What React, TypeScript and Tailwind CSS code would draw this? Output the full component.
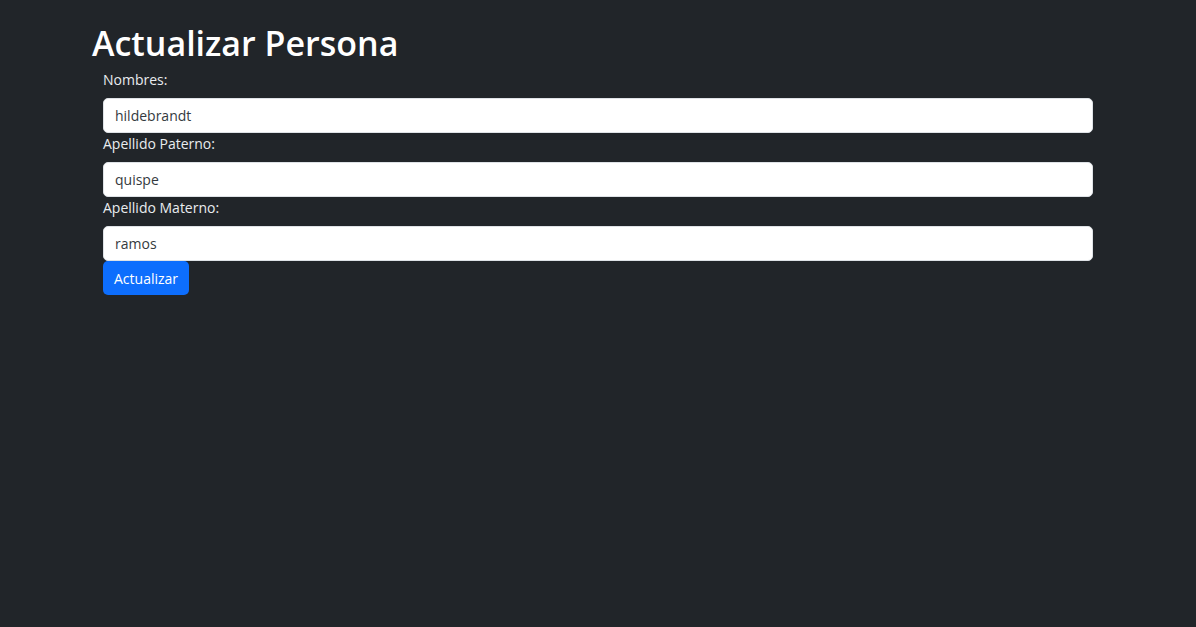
export default function App() {
  return (
    <div
      className="min-h-screen w-full bg-[#212529] text-[#dee2e6]"
      style={{ fontFamily: '"Open Sans", "Noto Sans", sans-serif' }}
    >
      <div className="pl-[92px] pr-[103px] pt-[22px]">
        <h1 className="text-[34px] font-semibold leading-[43px] text-white mb-[4px]">
          Actualizar Persona
        </h1>

        <form className="pl-[11px]" onSubmit={(e) => e.preventDefault()}>
          <Field label="Nombres:" value="hildebrandt" />
          <Field label="Apellido Paterno:" value="quispe" />
          <Field label="Apellido Materno:" value="ramos" />
          <button
            type="submit"
            className="h-[34px] px-[11px] rounded-[5px] bg-[#0d6efd] text-white text-[14px]"
          >
            Actualizar
          </button>
        </form>
      </div>
    </div>
  );
}

function Field({ label, value }: { label: string; value: string }) {
  return (
    <div>
      <label className="block text-[14px] leading-[22px] mb-[7px] text-[#e9ecef]">{label}</label>
      <input
        readOnly
        defaultValue={value}
        className="block w-full h-[35px] px-[11px] rounded-[5px] border border-[#dee2e6] bg-white text-[14px] text-[#343a40] outline-none"
      />
    </div>
  );
}
